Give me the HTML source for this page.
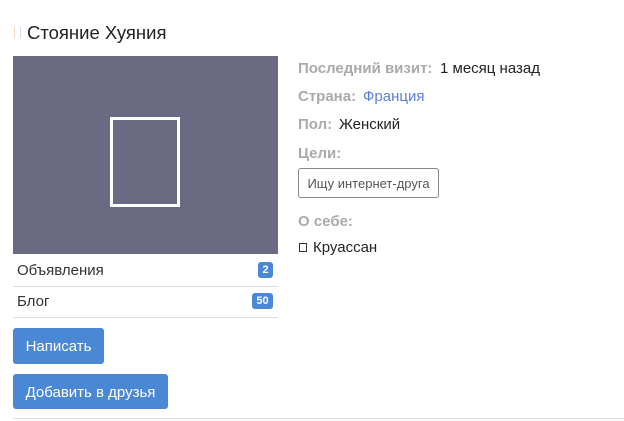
<!DOCTYPE html>
<html><head><meta charset="utf-8"><style>
body{margin:0;width:624px;height:421px;background:#fff;font-family:"Liberation Sans",sans-serif;color:#222;position:relative;overflow:hidden}
.a{position:absolute;white-space:nowrap}
.lbl{color:#aaa;font-weight:bold;font-size:15px}
.val{font-size:15px;color:#222}
.badge{position:absolute;background:#4a88d6;color:#fff;font-weight:bold;font-size:11px;border-radius:3px;height:16px;line-height:16px;text-align:center}
.btn{position:absolute;background:#4a88d6;color:#fff;font-size:15px;border-radius:3px;text-align:center}
.sep{position:absolute;left:13px;width:265px;height:1px;background:#ddd}
</style></head><body>
<div class="a" style="left:14px;top:27px;width:1px;height:11px;background:#f0d8b8"></div>
<div class="a" style="left:20px;top:27px;width:1px;height:11px;background:#d8d8f0"></div>
<div class="a" style="left:27px;top:22px;font-size:18.5px;color:#222">Стояние Хуяния</div>
<div class="a" style="left:13px;top:56px;width:265px;height:198px;background:#6a6a82"></div>
<div class="a" style="left:110px;top:117px;width:64px;height:84px;border:3px solid #fff"></div>
<div class="a" style="left:17px;top:262px;font-size:15px;color:#333">Объявления</div>
<div class="badge" style="left:258px;top:262px;width:15px">2</div>
<div class="sep" style="top:286px"></div>
<div class="a" style="left:17px;top:293px;font-size:15px;color:#333">Блог</div>
<div class="badge" style="left:252px;top:293px;width:21px">50</div>
<div class="sep" style="top:317px"></div>
<div class="btn" style="left:13px;top:328px;width:91px;height:36px;line-height:38px">Написать</div>
<div class="btn" style="left:13px;top:374px;width:155px;height:35px;line-height:37px">Добавить в друзья</div>
<div class="a" style="left:13px;top:418px;width:611px;height:1px;background:#ddd"></div>
<div class="a lbl" style="left:298px;top:60px">Последний визит:</div>
<div class="a val" style="left:440px;top:60px">1 месяц назад</div>
<div class="a lbl" style="left:298px;top:88px">Страна:</div>
<div class="a val" style="left:363px;top:88px;color:#5b7fd6">Франция</div>
<div class="a lbl" style="left:298px;top:116px">Пол:</div>
<div class="a val" style="left:339px;top:116px">Женский</div>
<div class="a lbl" style="left:298px;top:145px">Цели:</div>
<div class="a" style="left:298px;top:168px;width:139px;height:28px;border:1px solid #888;border-radius:3px;font-size:13px;color:#555;line-height:30px;text-align:center">Ищу интернет-друга</div>
<div class="a lbl" style="left:298px;top:213px">О себе:</div>
<div class="a" style="left:299px;top:243px;width:6px;height:7px;border:1px solid #333"></div>
<div class="a val" style="left:313px;top:239px">Круассан</div>
</body></html>
